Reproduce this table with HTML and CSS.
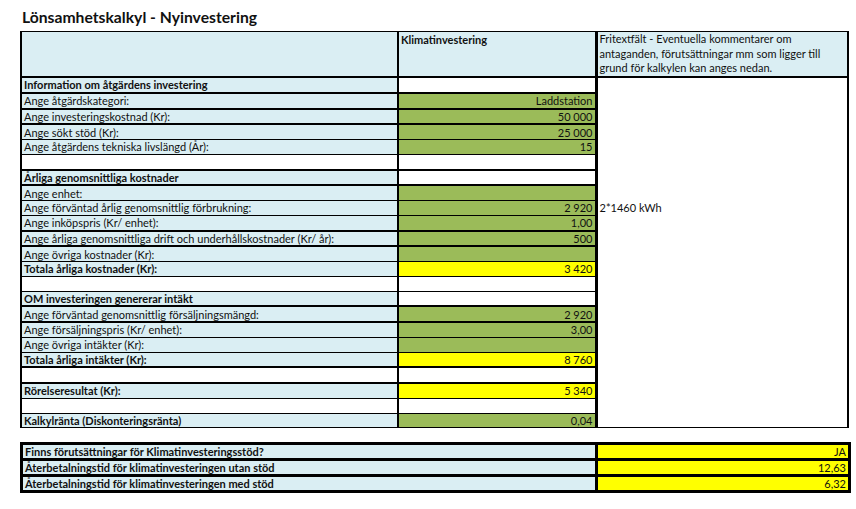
FILE: index.html
```
<!DOCTYPE html>
<html lang="sv">
<head>
<meta charset="utf-8">
<title>Lönsamhetskalkyl - Nyinvestering</title>
<link rel="stylesheet" href="styles.css">
</head>
<body>
<div class="sheet">
  <h1 class="title">Lönsamhetskalkyl - Nyinvestering</h1>
  <table class="calc">
    <colgroup><col class="c1"><col class="c2"><col class="c3"></colgroup>
    <tr class="head">
      <td class="lbl"></td>
      <td class="val-head">Klimatinvestering</td>
      <td class="note-head">Fritextfält - Eventuella kommentarer om<br>antaganden, förutsättningar mm som ligger till<br>grund för kalkylen kan anges nedan.</td>
    </tr>
    <tr><td class="lbl b">Information om åtgärdens investering</td><td class="val white"></td><td class="note"></td></tr>
    <tr class="tk"><td class="lbl">Ange åtgärdskategori:</td><td class="val green">Laddstation</td><td class="note"></td></tr>
    <tr class="tk"><td class="lbl">Ange investeringskostnad (Kr):</td><td class="val green">50 000</td><td class="note"></td></tr>
    <tr class="tk"><td class="lbl">Ange sökt stöd (Kr):</td><td class="val green">25 000</td><td class="note"></td></tr>
    <tr><td class="lbl">Ange åtgärdens tekniska livslängd (År):</td><td class="val green">15</td><td class="note"></td></tr>
    <tr><td class="lbl white"></td><td class="val white"></td><td class="note"></td></tr>
    <tr class="tk"><td class="lbl b">Årliga genomsnittliga kostnader</td><td class="val white"></td><td class="note"></td></tr>
    <tr class="tk"><td class="lbl">Ange enhet:</td><td class="val green"></td><td class="note"></td></tr>
    <tr><td class="lbl">Ange förväntad årlig genomsnittlig förbrukning:</td><td class="val green">2 920</td><td class="note">2*1460 kWh</td></tr>
    <tr><td class="lbl">Ange inköpspris (Kr/ enhet):</td><td class="val green">1,00</td><td class="note"></td></tr>
    <tr class="tk"><td class="lbl">Ange årliga genomsnittliga drift och underhållskostnader (Kr/ år):</td><td class="val green">500</td><td class="note"></td></tr>
    <tr class="tk"><td class="lbl">Ange övriga kostnader (Kr):</td><td class="val green"></td><td class="note"></td></tr>
    <tr><td class="lbl b">Totala årliga kostnader (Kr):</td><td class="val yellow">3 420</td><td class="note"></td></tr>
    <tr><td class="lbl white"></td><td class="val white"></td><td class="note"></td></tr>
    <tr><td class="lbl b">OM investeringen genererar intäkt</td><td class="val white"></td><td class="note"></td></tr>
    <tr class="tk"><td class="lbl">Ange förväntad genomsnittlig försäljningsmängd:</td><td class="val green">2 920</td><td class="note"></td></tr>
    <tr class="tk"><td class="lbl">Ange försäljningspris (Kr/ enhet):</td><td class="val green">3,00</td><td class="note"></td></tr>
    <tr><td class="lbl">Ange övriga intäkter (Kr):</td><td class="val green"></td><td class="note"></td></tr>
    <tr><td class="lbl b">Totala årliga intäkter (Kr):</td><td class="val yellow">8 760</td><td class="note"></td></tr>
    <tr class="tk"><td class="lbl white"></td><td class="val white"></td><td class="note"></td></tr>
    <tr class="tk"><td class="lbl b">Rörelseresultat (Kr):</td><td class="val yellow">5 340</td><td class="note"></td></tr>
    <tr><td class="lbl white"></td><td class="val white"></td><td class="note"></td></tr>
    <tr class="last"><td class="lbl b">Kalkylränta (Diskonteringsränta)</td><td class="val green">0,04</td><td class="note"></td></tr>
  </table>

  <table class="summary">
    <colgroup><col class="s1"><col class="s2"></colgroup>
    <tr><td class="lbl b">Finns förutsättningar för Klimatinvesteringsstöd?</td><td class="val yellow">JA</td></tr>
    <tr><td class="lbl b">Återbetalningstid för klimatinvesteringen utan stöd</td><td class="val yellow">12,63</td></tr>
    <tr><td class="lbl b">Återbetalningstid för klimatinvesteringen med stöd</td><td class="val yellow">6,32</td></tr>
  </table>
</div>
</body>
</html>
```
FILE: styles.css
```
html, body {
  margin: 0;
  padding: 0;
  background: #ffffff;
}

body {
  font-family: Lato, "Open Sans", "Liberation Sans", sans-serif;
  color: #111111;
}

.sheet {
  padding: 9px 0 0 20px;
}

.title {
  margin: 0 0 5px 2px;
  font-size: 15.7px;
  line-height: 17px;
  font-weight: 700;
  color: #111;
}

table {
  border-collapse: collapse;
  table-layout: fixed;
  font-size: 11px;
}

.calc .c1 { width: 377px; }
.calc .c2 { width: 198px; }
.calc .c3 { width: 252px; }

.calc td {
  height: 13.75px;
  line-height: 13px;
  padding: 0 2px;
  white-space: nowrap;
  overflow: hidden;
  border-top: 1px solid #000;
}

.calc tr.tk td.lbl,
.calc tr.tk td.val {
  border-top-width: 2px;
}

.calc td.lbl {
  background: #daeef3;
  border-left: 2px solid #000;
  border-right: 2px solid #000;
}

.calc td.val {
  text-align: right;
  border-right: 3px solid #000;
}

.calc td.note {
  border-top: none;
  border-right: 2px solid #000;
  background: #fff;
}

.calc tr.last td {
  border-bottom: 1px solid #000;
}

.calc tr.head td {
  height: 43px;
  vertical-align: top;
  background: #daeef3;
  border-top: 1px solid #000;
  border-bottom: 2px solid #000;
  white-space: nowrap;
  line-height: 14.6px;
}

.calc tr.head td.val-head {
  font-weight: 700;
  border-right: 3px solid #000;
  padding-top: 1px;
}

.calc tr.head td.note-head {
  border-right: 2px solid #000;
  padding: 0 2px;
}

.b { font-weight: 700; }

.white { background: #ffffff; }
.calc td.lbl.white { background: #ffffff; }
.green { background: #9bbb59; }
.yellow { background: #ffff00; }

.summary {
  margin-top: 14px;
}

.summary .s1 { width: 575px; }
.summary .s2 { width: 253px; }

.summary td {
  height: 13px;
  line-height: 13px;
  padding: 0 2px;
  border: 3px solid #000;
  white-space: nowrap;
}

.summary td.lbl { background: #daeef3; }
.summary td.val { text-align: right; }
```
